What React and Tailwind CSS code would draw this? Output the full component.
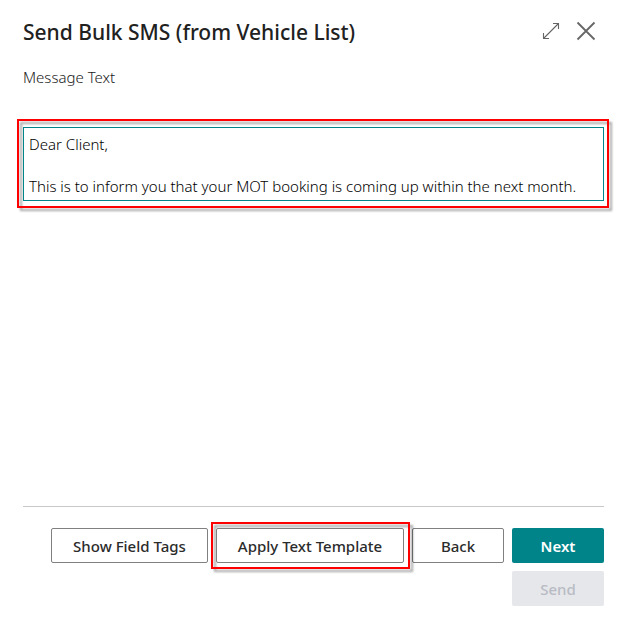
import { useState } from "react";

function Highlight({ className }) {
  return (
    <span
      aria-hidden="true"
      className={`pointer-events-none absolute border-2 border-[#ff0000] drop-shadow-[3px_3px_1px_rgba(0,0,0,0.35)] ${className}`}
    />
  );
}

const outline =
  "h-[35px] rounded-[2px] border border-[#808080] bg-white pt-0.5 text-[15px] font-medium text-[#2b2b2b]";

export default function App() {
  const [message, setMessage] = useState(
    "Dear Client,\n\nThis is to inform you that your MOT booking is coming up within the next month."
  );

  return (
    <main className="flex min-h-screen flex-col bg-white pt-4 pr-[22px] pb-[23px] pl-[23px] font-['Noto_Sans','Open_Sans',sans-serif] text-[#212121]">
      <header className="flex h-8 items-center justify-between">
        <h1 className="text-[21px] leading-8 font-medium whitespace-nowrap">Send Bulk SMS (from Vehicle List)</h1>
        <div className="flex items-center gap-4 pr-2 pb-0.5 text-[#666666]">
          <button type="button" aria-label="Expand">
            <svg className="block" width="18" height="18" viewBox="0 0 18 18" fill="none" stroke="currentColor" strokeWidth="1.1">
              <path d="M1.5 16.5 16.5 1.5M11 1.5h5.5V7M1.5 11v5.5H7" />
            </svg>
          </button>
          <button type="button" aria-label="Close">
            <svg className="block" width="20" height="20" viewBox="0 0 20 20" fill="none" stroke="currentColor" strokeWidth="1.8">
              <path d="M1.5 1.5 18.5 18.5M18.5 1.5 1.5 18.5" />
            </svg>
          </button>
        </div>
      </header>

      <label htmlFor="message" className="mt-[19px] text-[15px] leading-5 font-light text-[#212121]">
        Message Text
      </label>

      <div className="relative mt-10">
        <Highlight className="-top-2 -right-[5px] -bottom-[7px] -left-1.5" />
        <textarea
          id="message"
          value={message}
          onChange={(e) => setMessage(e.target.value)}
          className="relative block h-[74px] w-full resize-none overflow-hidden border border-[#008489] bg-white px-[5px] py-1.5 text-[15px] leading-[21px] font-light text-black outline-none"
        />
      </div>

      <footer className="mt-auto flex flex-wrap justify-end gap-2 border-t border-[#c8c8c8] pt-[21px]">
        <button type="button" className={`${outline} w-[157px]`}>Show Field Tags</button>
        <div className="relative z-10">
          <Highlight className="-top-1.5 -right-1.5 -bottom-1.5 -left-[5px]" />
          <button type="button" className={`${outline} relative block w-[188px]`}>Apply Text Template</button>
        </div>
        <button type="button" className={`${outline} w-[92px]`}>Back</button>
        <button type="button" className="h-[35px] w-[92px] rounded-[2px] bg-[#008489] pt-0.5 text-[15px] font-semibold text-white">
          Next
        </button>
        <button type="button" disabled className="h-[35px] w-[92px] rounded-[2px] bg-[#e6e7ea] pt-0.5 text-[15px] font-medium text-[#b8bbc4]">
          Send
        </button>
      </footer>
    </main>
  );
}
